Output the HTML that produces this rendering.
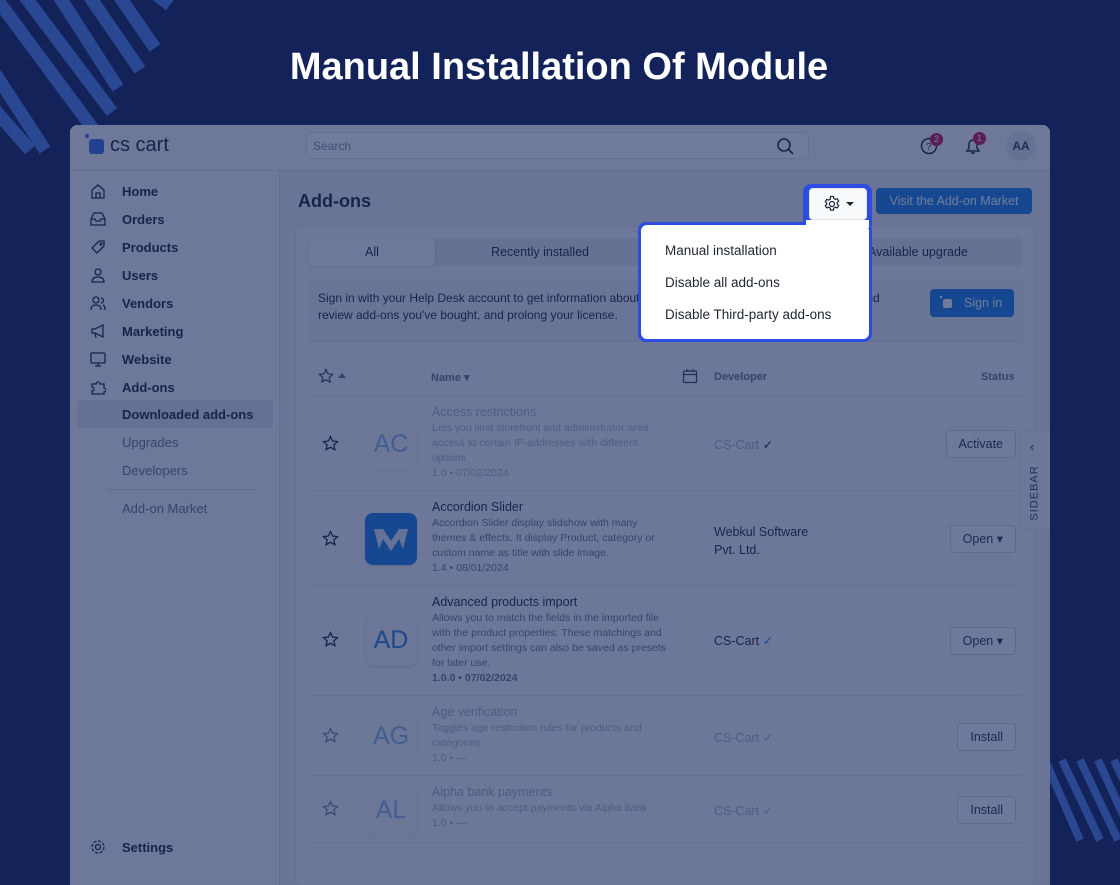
<!DOCTYPE html>
<html><head><meta charset="utf-8"><style>
*{box-sizing:border-box;margin:0;padding:0}
body{width:1120px;height:880px;overflow:hidden;background:#13235a;font-family:"Liberation Sans",sans-serif;position:relative}
.abs{position:absolute}
h1{position:absolute;left:0;width:1118px;top:46px;text-align:center;color:#fff;font-size:38px;font-weight:bold;letter-spacing:0}
#panel{position:absolute;left:70px;top:125px;width:980px;height:760px;background:#eceef3;border-radius:8px 8px 0 0;overflow:hidden;color:#1e2535}
#hdr{position:absolute;left:0;top:0;width:980px;height:46px;background:#f8f9fb;border-bottom:1px solid #dde0e6}
#side{position:absolute;left:0;top:46px;width:210px;height:720px;background:#f6f7f9;border-right:1px solid #dde0e6}
.si{position:absolute;left:52px;font-size:13px;font-weight:bold;color:#1e2535}
.ss{position:absolute;left:52px;font-size:13px;color:#6b7385}
.ic{position:absolute;left:20px;width:16px;height:16px}
#card{position:absolute;left:225px;top:101px;width:740px;height:660px;background:#f5f6f8;border:1px solid #e0e3e8;border-radius:6px}
.row{position:absolute;left:14px;width:712px;border-bottom:1px solid #dfe2e7}
.tile{position:absolute;left:55px;width:52px;height:52px;border-radius:8px;background:#f2f3f6;box-shadow:0 1px 2px rgba(0,0,0,.15);color:#2f7fd4;font-size:25px;text-align:center;line-height:52px}
.nm{position:absolute;left:122px;font-size:12.5px}
.ds{position:absolute;left:122px;font-size:10.5px;line-height:15px;color:#6d7487;width:240px}
.dev{position:absolute;left:404px;font-size:12.5px}
.btn{position:absolute;right:6px;height:28px;border:1px solid #cfd3da;border-radius:4px;background:#fafbfc;font-size:12.5px;line-height:26px;padding:0 12px;color:#2a3040}
.fade{opacity:.55}
#ov{position:absolute;left:70px;top:125px;width:980px;height:760px;background:rgba(19,35,90,.6);border-radius:8px 8px 0 0}
</style></head><body>
<svg class="abs" style="left:0;top:0" width="1120" height="880">
<g stroke="#2a4792" stroke-width="13">
<line x1="-40" y1="20" x2="45" y2="150"/><line x1="-10" y1="-10" x2="105" y2="145"/><line x1="20" y1="-10" x2="112" y2="112"/>
<line x1="55" y1="-10" x2="118" y2="88"/><line x1="85" y1="-10" x2="140" y2="70"/><line x1="115" y1="-10" x2="155" y2="48"/><line x1="150" y1="-10" x2="170" y2="5"/>
<line x1="-40" y1="70" x2="30" y2="150"/>
</g>
<g stroke="#2a4792" stroke-width="8" clip-path="url(#c)">
<line x1="1045" y1="760" x2="1080" y2="840"/><line x1="1062" y1="760" x2="1100" y2="840"/><line x1="1080" y1="760" x2="1118" y2="840"/><line x1="1098" y1="760" x2="1130" y2="830"/><line x1="1114" y1="760" x2="1140" y2="815"/>
</g>
<clipPath id="c"><rect x="1050" y="758" width="70" height="90"/></clipPath>
</svg>
<h1>Manual Installation Of Module</h1>
<div id="panel">
<div id="hdr">
 <div class="abs" style="left:15px;top:9px;width:4px;height:4px;border-radius:2px;background:#3a6fe0"></div>
 <div class="abs" style="left:19px;top:14px;width:15px;height:15px;border-radius:3px;background:#3a6fe0"></div>
 <div class="abs" style="left:40px;top:9px;font-size:20px;color:#1e2535">cs cart</div>
 <div class="abs" style="left:236px;top:7px;width:503px;height:27px;border:1px solid #dfe2e7;border-radius:5px;background:#fff;font-size:12px;color:#8a90a0;padding:6px 6px">Search</div>
 <svg class="abs" style="left:706px;top:12px" width="18" height="18" fill="none" stroke="#1e2535" stroke-width="1.6"><circle cx="8" cy="8" r="6"/><line x1="12.5" y1="12.5" x2="17" y2="17"/></svg>
 <svg class="abs" style="left:850px;top:11px" width="20" height="20" fill="none" stroke="#1e2535" stroke-width="1.5"><circle cx="9" cy="10" r="7.5"/><text x="6" y="14" font-size="10" fill="#1e2535" stroke="none">?</text></svg>
 <div class="abs" style="left:860px;top:8px;width:13px;height:13px;border-radius:7px;background:#c8174c;color:#fff;font-size:9px;text-align:center;line-height:13px">2</div>
 <svg class="abs" style="left:893px;top:11px" width="20" height="20" fill="none" stroke="#1e2535" stroke-width="1.5"><path d="M4 15h12l-2-3V8a4 4 0 0 0-8 0v4z"/><path d="M8 17h4"/></svg>
 <div class="abs" style="left:903px;top:7px;width:13px;height:13px;border-radius:7px;background:#c8174c;color:#fff;font-size:9px;text-align:center;line-height:13px">1</div>
 <div class="abs" style="left:936px;top:6px;width:30px;height:30px;border-radius:15px;background:#e3e6ec;font-size:12px;font-weight:bold;text-align:center;line-height:30px;color:#3a4050">AA</div>
</div>
<div id="side">
 <svg class="ic" style="top:12px" fill="none" stroke="#1e2535" stroke-width="1.3"><path d="M2 7l6-5 6 5v8H2z M6 15v-5h4v5"/></svg><div class="si" style="top:13px">Home</div>
 <svg class="ic" style="top:40px" fill="none" stroke="#1e2535" stroke-width="1.3"><path d="M1 8l3-6h8l3 6v6H1z M1 8h4l1 2h4l1-2h4"/></svg><div class="si" style="top:41px">Orders</div>
 <svg class="ic" style="top:68px" fill="none" stroke="#1e2535" stroke-width="1.3"><path d="M2 9l7-7h5v5l-7 7z"/><circle cx="11" cy="5" r="1"/></svg><div class="si" style="top:69px">Products</div>
 <svg class="ic" style="top:96px" fill="none" stroke="#1e2535" stroke-width="1.3"><circle cx="8" cy="5" r="3"/><path d="M2 15c0-4 3-5 6-5s6 1 6 5z"/></svg><div class="si" style="top:97px">Users</div>
 <svg class="ic" style="top:124px" fill="none" stroke="#1e2535" stroke-width="1.3"><circle cx="6" cy="5" r="3"/><path d="M1 15c0-4 2-5 5-5s5 1 5 5M11 3a2.5 2.5 0 0 1 0 5M13 10c2 1 2 3 2 5"/></svg><div class="si" style="top:125px">Vendors</div>
 <svg class="ic" style="top:152px" fill="none" stroke="#1e2535" stroke-width="1.3"><path d="M2 6h3l8-4v12l-8-4H2z M5 10l1 5"/></svg><div class="si" style="top:153px">Marketing</div>
 <svg class="ic" style="top:180px" fill="none" stroke="#1e2535" stroke-width="1.3"><rect x="1" y="2" width="14" height="10" rx="1"/><path d="M8 12v3M5 15h6"/></svg><div class="si" style="top:181px">Website</div>
 <svg class="ic" style="top:208px" fill="none" stroke="#1e2535" stroke-width="1.3"><path d="M2 5h4a2 2 0 1 1 4 0h4v4a2 2 0 1 1 0 4v2H2v-3a2 2 0 1 0 0-4z"/></svg><div class="si" style="top:209px">Add-ons</div>
 <div class="abs" style="left:7px;top:229px;width:196px;height:28px;background:#e2e5eb;border-radius:4px"></div>
 <div class="si" style="top:236px">Downloaded add-ons</div>
 <div class="ss" style="top:264px">Upgrades</div>
 <div class="ss" style="top:292px">Developers</div>
 <div class="abs" style="left:38px;top:318px;width:147px;height:1px;background:#d4d8df"></div>
 <div class="ss" style="top:330px">Add-on Market</div>
 <svg class="ic" style="top:668px" fill="none" stroke="#1e2535" stroke-width="1.3"><circle cx="8" cy="8" r="2.5"/><circle cx="8" cy="8" r="6" stroke-dasharray="3 1.7"/></svg><div class="si" style="top:669px">Settings</div>
</div>
<div class="abs" style="left:228px;top:66px;font-size:18px;font-weight:bold">Add-ons</div>
<div class="abs" style="left:806px;top:63px;width:156px;height:26px;border-radius:4px;background:#1a7fe0;color:#fff;font-size:12.5px;text-align:center;line-height:26px">Visit the Add-on Market</div>
<div id="card">
 <div class="abs" style="left:13px;top:11px;width:714px;height:28px;background:#e4e6eb;border-radius:5px"></div>
 <div class="abs" style="left:13px;top:11px;width:126px;height:28px;background:#fafbfc;border-radius:5px;box-shadow:0 1px 2px rgba(0,0,0,.15);font-size:12.5px;text-align:center;line-height:28px">All</div>
 <div class="abs" style="left:195px;top:18px;font-size:12.5px">Recently installed</div>
 <div class="abs" style="left:572px;top:18px;font-size:12.5px">Available upgrade</div>
 <div class="abs" style="left:13px;top:54px;width:714px;height:61px;background:#eceef2;border:1px solid #e0e3e8;border-radius:4px"></div>
 <div class="abs" style="left:22px;top:63px;font-size:12px;line-height:17px;width:588px">Sign in with your Help Desk account to get information about add-ons in the Add-on Marketplace, rate and review add-ons you've bought, and prolong your license.</div>
 <div class="abs" style="left:634px;top:62px;width:84px;height:28px;background:#1a7fe0;border-radius:4px;color:#fff;font-size:12.5px;line-height:28px;padding-left:34px">Sign in</div>
 <div class="abs" style="left:644px;top:69px;width:2px;height:2px;background:#fff"></div>
 <div class="abs" style="left:647px;top:72px;width:9px;height:9px;background:#fff;border-radius:2px"></div>
 <svg class="abs" style="left:22px;top:141px" width="16" height="16" fill="none" stroke="#3a4050" stroke-width="1.2"><path d="M8 1.5l2 4.3 4.6.5-3.4 3.1 1 4.6L8 11.7 3.8 14l1-4.6L1.4 6.3 6 5.8z"/></svg>
 <div class="abs" style="left:42px;top:146px;border-left:4px solid transparent;border-right:4px solid transparent;border-bottom:5px solid #6b7385"></div>
 <div class="abs" style="left:135px;top:144px;font-size:11px;font-weight:bold;color:#6b7385">Name ▾</div>
 <svg class="abs" style="left:386px;top:141px" width="16" height="16" fill="none" stroke="#3a4050" stroke-width="1.2"><rect x="1.5" y="3" width="13" height="11.5" rx="1"/><path d="M1.5 6.5h13M5 1v3M11 1v3"/></svg>
 <div class="abs" style="left:418px;top:144px;font-size:11px;font-weight:bold;color:#6b7385">Developer</div>
 <div class="abs" style="left:685px;top:144px;font-size:11px;font-weight:bold;color:#6b7385">Status</div>
 <div class="row" style="top:0;height:169px"></div>
 <div class="row" style="top:169px;height:95px">
  <svg class="abs" style="left:12px;top:39px" width="17" height="17" fill="none" stroke="#1e2535" stroke-width="1.3"><path d="M8.5 1.5l2.1 4.5 4.9.6-3.6 3.3 1 4.8-4.4-2.4-4.4 2.4 1-4.8L1.5 6.6l4.9-.6z"/></svg>
  <div class="tile fade" style="top:22px">AC</div>
  <div class="nm fade" style="top:9px;color:#6d7487">Access restrictions</div>
  <div class="ds fade" style="top:25px">Lets you limit storefront and administrator area access to certain IP-addresses with different options<br>1.0 • 07/02/2024</div>
  <div class="dev" style="top:41px"><span class="fade" style="color:#6d7487">CS-Cart</span> ✓</div>
  <div class="btn" style="top:34px">Activate</div>
 </div>
 <div class="row" style="top:264px;height:95px">
  <svg class="abs" style="left:12px;top:39px" width="17" height="17" fill="none" stroke="#1e2535" stroke-width="1.3"><path d="M8.5 1.5l2.1 4.5 4.9.6-3.6 3.3 1 4.8-4.4-2.4-4.4 2.4 1-4.8L1.5 6.6l4.9-.6z"/></svg>
  <div class="tile" style="top:22px;background:#1a7fe0"><svg width="52" height="52"><path d="M9 16h9l8 12 8-12h9l-5 20-4-10-8 12-8-12-4 10z" fill="#dfe9f7"/></svg></div>
  <div class="nm" style="top:9px">Accordion Slider</div>
  <div class="ds" style="top:25px">Accordion Slider display slidshow with many themes &amp; effects. It display Product, category or custom name as title with slide image.<br>1.4 • 08/01/2024</div>
  <div class="dev" style="top:32px;line-height:18px">Webkul Software<br>Pvt. Ltd.</div>
  <div class="btn" style="top:34px">Open ▾</div>
 </div>
 <div class="row" style="top:359px;height:110px">
  <svg class="abs" style="left:12px;top:45px" width="17" height="17" fill="none" stroke="#1e2535" stroke-width="1.3"><path d="M8.5 1.5l2.1 4.5 4.9.6-3.6 3.3 1 4.8-4.4-2.4-4.4 2.4 1-4.8L1.5 6.6l4.9-.6z"/></svg>
  <div class="tile" style="top:28px">AD</div>
  <div class="nm" style="top:9px">Advanced products import</div>
  <div class="ds" style="top:25px">Allows you to match the fields in the imported file with the product properties. These matchings and other import settings can also be saved as presets for later use.<br><b>1.0.0 • 07/02/2024</b></div>
  <div class="dev" style="top:47px">CS-Cart <span style="color:#1a7fe0">✓</span></div>
  <div class="btn" style="top:41px">Open ▾</div>
 </div>
 <div class="row" style="top:469px;height:80px">
  <svg class="abs fade" style="left:12px;top:31px" width="17" height="17" fill="none" stroke="#1e2535" stroke-width="1.3"><path d="M8.5 1.5l2.1 4.5 4.9.6-3.6 3.3 1 4.8-4.4-2.4-4.4 2.4 1-4.8L1.5 6.6l4.9-.6z"/></svg>
  <div class="tile fade" style="top:14px">AG</div>
  <div class="nm fade" style="top:9px;color:#6d7487">Age verification</div>
  <div class="ds fade" style="top:25px">Toggles age restriction rules for products and categories<br>1.0 • —</div>
  <div class="dev" style="top:34px"><span class="fade" style="color:#6d7487">CS-Cart ✓</span></div>
  <div class="btn" style="top:27px">Install</div>
 </div>
 <div class="row" style="top:549px;height:67px">
  <svg class="abs fade" style="left:12px;top:24px" width="17" height="17" fill="none" stroke="#1e2535" stroke-width="1.3"><path d="M8.5 1.5l2.1 4.5 4.9.6-3.6 3.3 1 4.8-4.4-2.4-4.4 2.4 1-4.8L1.5 6.6l4.9-.6z"/></svg>
  <div class="tile fade" style="top:8px">AL</div>
  <div class="nm fade" style="top:9px;color:#6d7487">Alpha bank payments</div>
  <div class="ds fade" style="top:25px">Allows you to accept payments via Alpha bank<br>1.0 • —</div>
  <div class="dev" style="top:27px"><span class="fade" style="color:#6d7487">CS-Cart ✓</span></div>
  <div class="btn" style="top:20px">Install</div>
 </div>
</div>
<div class="abs" style="left:950px;top:305px;width:30px;height:100px;background:#f4f5f8;border:1px solid #dfe2e7;border-right:0;border-radius:4px 0 0 4px">
 <div class="abs" style="left:9px;top:8px;font-size:13px;color:#3a4050">‹</div>
 <div class="abs" style="left:-14px;top:56px;transform:rotate(-90deg);font-size:11px;color:#3a4050;letter-spacing:1px">SIDEBAR</div>
</div>
</div>
<div id="ov"></div>
<div class="abs" style="left:803px;top:184px;width:69px;height:42px;border-radius:8px 8px 0 0;background:#2d4de0"></div>
<div class="abs" style="left:638px;top:222px;width:234px;height:120px;border-radius:8px;background:#2d4de0"></div>
<div class="abs" style="left:809px;top:188px;width:58px;height:32px;border-radius:4px;background:#f8f9fb;border:1px solid #dfe2e7"></div>
<div class="abs" style="left:641px;top:225px;width:228px;height:114px;border-radius:6px;background:#fff"></div>
<div class="abs" style="left:806px;top:220px;width:63px;height:8px;background:#fff"></div>
<svg class="abs" style="left:823px;top:195px" width="18" height="18" fill="none" stroke="#1e2535" stroke-width="1.2"><circle cx="9" cy="9" r="2.5"/><path d="M7.6 1.5h2.8l.4 2 1.6.9 1.9-.7 1.4 2.4-1.5 1.3v1.8l1.5 1.3-1.4 2.4-1.9-.7-1.6.9-.4 2H7.6l-.4-2-1.6-.9-1.900.7-1.4-2.4 1.5-1.3V8.1L2.3 6.8l1.4-2.4 1.9.7 1.6-.9z"/></svg>
<div class="abs" style="left:846px;top:202px;border-left:4px solid transparent;border-right:4px solid transparent;border-top:4px solid #1e2535"></div>
<div class="abs" style="left:665px;top:243px;font-size:13.5px;color:#1e2535">Manual installation</div>
<div class="abs" style="left:665px;top:275px;font-size:13.5px;color:#1e2535">Disable all add-ons</div>
<div class="abs" style="left:665px;top:307px;font-size:13.5px;color:#1e2535">Disable Third-party add-ons</div>
</body></html>
